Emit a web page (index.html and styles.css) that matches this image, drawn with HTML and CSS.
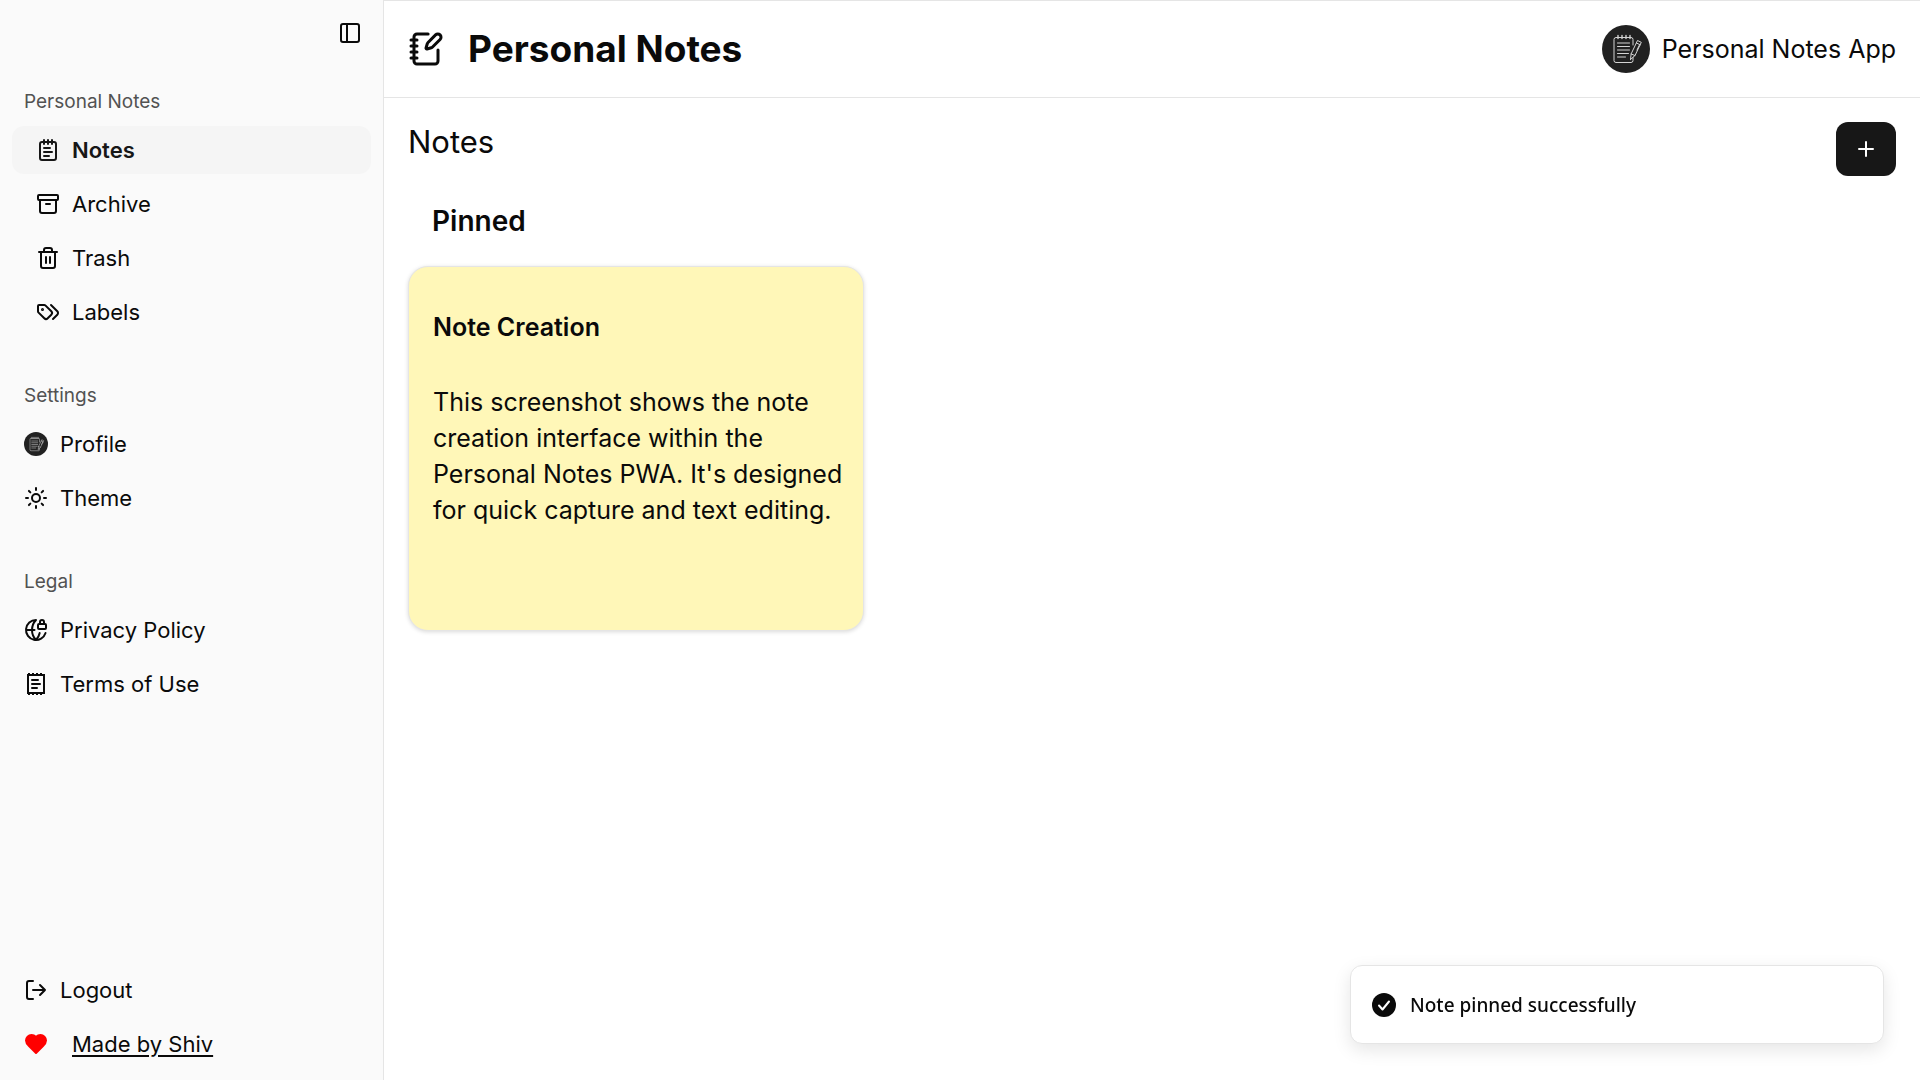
FILE: index.html
```html
<!DOCTYPE html>
<html lang="en">
<head>
<meta charset="utf-8">
<meta name="viewport" content="width=device-width, initial-scale=1">
<title>Personal Notes</title>
<link rel="stylesheet" href="styles.css">
</head>
<body>
<svg class="defs" aria-hidden="true">
  <symbol id="logo" viewBox="0 0 48 48">
    <circle cx="24" cy="24" r="24" fill="#212121"/>
    <g fill="none" stroke="#d4d4d4" stroke-linecap="round" stroke-linejoin="round">
      <path d="M31 31v4.500a2 2 0 0 1-2 2H14a2 2 0 0 1-2-2V14.500a2 2 0 0 1 2-2h15a2 2 0 0 1 2 2V20"/>
      <path stroke-width="1.400" d="M16 10.500v3M20 10.500v3M24 10.500v3M28 10.500v3"/>
      <path d="M15.500 18h12M15.500 21.500h12M15.500 25h12M15.500 28.500h11M15.500 32h8"/>
      <path fill="#212121" d="M28.500 34.500l.6-5.500 6.400-13.500 3.800 1.800L33 30.500l-4.500 4zM29.100 29l3.900 1.500M34.400 18l3.800 1.800M35 25l2.200-4.500"/>
    </g>
  </symbol>
</svg>
<div class="app">
  <aside class="sidebar">
    <div class="sidebar-top">
      <button class="icon-button" aria-label="Toggle sidebar">
        <svg class="icon" viewBox="0 0 24 24"><rect x="3" y="3" width="18" height="18" rx="2"/><path d="M9 3v18"/></svg>
      </button>
    </div>
    <nav class="groups">
      <section class="group">
        <h2 class="group-label">Personal Notes</h2>
        <a class="item nested active" href="#notes">
          <svg class="icon" viewBox="0 0 24 24"><path d="M8 2v4M12 2v4M16 2v4"/><rect x="4" y="4" width="16" height="18" rx="2"/><path d="M8 10h6M8 14h8M8 18h5"/></svg>
          <span>Notes</span></a>
        <a class="item nested" href="#archive">
          <svg class="icon" viewBox="0 0 24 24"><rect x="2" y="3" width="20" height="5" rx="1"/><path d="M4 8v11a2 2 0 0 0 2 2h12a2 2 0 0 0 2-2V8M10 12h4"/></svg>
          <span>Archive</span></a>
        <a class="item nested" href="#trash">
          <svg class="icon" viewBox="0 0 24 24"><path d="M3 6h18M19 6v14a2 2 0 0 1-2 2H7a2 2 0 0 1-2-2V6M8 6V4a2 2 0 0 1 2-2h4a2 2 0 0 1 2 2v2M10 11v6M14 11v6"/></svg>
          <span>Trash</span></a>
        <a class="item nested" href="#labels">
          <svg class="icon" viewBox="0 0 24 24"><path d="m15 5 6.300 6.300a2.400 2.400 0 0 1 0 3.400L17 19"/><path d="M9.586 5.586A2 2 0 0 0 8.172 5H3a1 1 0 0 0-1 1v5.172a2 2 0 0 0 .586 1.414L8.290 18.290a2.426 2.426 0 0 0 3.420 0l3.580-3.580a2.426 2.426 0 0 0 0-3.420z"/><circle cx="6.500" cy="9.500" r=".5" fill="currentColor"/></svg>
          <span>Labels</span></a>
      </section>
      <section class="group">
        <h2 class="group-label">Settings</h2>
        <a class="item" href="#profile"><svg class="avatar-small"><use href="#logo"/></svg><span>Profile</span></a>
        <button class="item">
          <svg class="icon" viewBox="0 0 24 24"><circle cx="12" cy="12" r="4"/><path d="M12 2v2M12 20v2M4.930 4.930l1.410 1.410M17.660 17.660l1.410 1.410M2 12h2M20 12h2M6.340 17.660l-1.410 1.410M19.070 4.930l-1.410 1.410"/></svg>
          <span>Theme</span></button>
      </section>
      <section class="group">
        <h2 class="group-label">Legal</h2>
        <a class="item" href="#privacy">
          <svg class="icon" viewBox="0 0 24 24"><path d="M15.686 15A14.500 14.500 0 0 1 12 22a14.500 14.500 0 0 1 0-20 10 10 0 1 0 9.542 13M2 12h8.500M20 6V4a2 2 0 1 0-4 0v2"/><rect x="14" y="6" width="8" height="5" rx="1"/></svg>
          <span>Privacy Policy</span></a>
        <a class="item" href="#terms">
          <svg class="icon" viewBox="0 0 24 24"><path stroke-linejoin="miter" d="M4 3v18h16V3z"/><path stroke-width="1" stroke-dasharray="2 2" stroke-linecap="butt" d="M4 1.500h16M4 22.500h16"/><path d="M8 8h6M8 12h8M8 16h5"/></svg>
          <span>Terms of Use</span></a>
      </section>
    </nav>
    <footer class="sidebar-footer">
      <button class="item">
        <svg class="icon" viewBox="0 0 24 24"><path d="M9 21H5a2 2 0 0 1-2-2V5a2 2 0 0 1 2-2h4M16 17l5-5-5-5M21 12H9"/></svg>
        <span>Logout</span></button>
      <div class="item credit">
        <svg class="icon heart" viewBox="0 0 24 24"><path d="M19 14c1.490-1.460 3-3.210 3-5.500A5.500 5.500 0 0 0 16.500 3c-1.760 0-3 .5-4.500 2-1.500-1.500-2.740-2-4.500-2A5.500 5.500 0 0 0 2 8.500c0 2.300 1.500 4.050 3 5.500l7 7Z"/></svg>
        <a href="#shiv">Made by Shiv</a></div>
    </footer>
  </aside>

  <main class="main">
    <header class="topbar">
      <svg class="brand-icon" viewBox="0 0 24 24"><path d="M13.400 2H6a2 2 0 0 0-2 2v16a2 2 0 0 0 2 2h12a2 2 0 0 0 2-2v-7.400M2 6h4M2 10h4M2 14h4M2 18h4"/><path d="M21.378 5.626a1 1 0 1 0-3.004-3.004l-5.010 5.012a2 2 0 0 0-.506.854l-.837 2.870a.5.5 0 0 0 .620.620l2.870-.837a2 2 0 0 0 .854-.506z"/></svg>
      <h1 class="title">Personal Notes</h1>
      <a class="account" href="#profile"><svg class="avatar"><use href="#logo"/></svg><span>Personal Notes App</span></a>
    </header>
    <div class="content">
      <div class="content-head">
        <h2 class="page-name">Notes</h2>
        <button class="add" aria-label="Add note"><svg class="icon" viewBox="0 0 24 24"><path d="M5 12h14M12 5v14"/></svg></button>
      </div>
      <h3 class="section-name">Pinned</h3>
      <div class="grid">
        <article class="card">
          <h4 class="card-title">Note Creation</h4>
          <p class="card-text">This screenshot shows the note creation interface within the Personal Notes PWA. It's designed for quick capture and text editing.</p>
        </article>
      </div>
    </div>
  </main>
</div>
<div class="toast" role="status">
  <svg class="toast-icon" viewBox="0 0 24 24"><circle cx="12" cy="12" r="12" fill="#0a0a0a"/><path d="M7 12.500l3.500 4L17 8.500" fill="none" stroke="#fff" stroke-width="2" stroke-linecap="round" stroke-linejoin="round"/></svg>
  <span>Note pinned successfully</span>
</div>
</body>
</html>
```
FILE: styles.css
```css
* { box-sizing: border-box; }
body {
  margin: 0;
  font-family: Inter, "Liberation Sans", sans-serif;
  font-size: 22px;
  color: #0a0a0a;
  background: #fff;
}
h1, h2, h3, h4, p { margin: 0; }
a { color: inherit; }
button { font: inherit; color: inherit; border: 0; background: none; cursor: pointer; }
.defs { position: absolute; width: 0; height: 0; }
.icon {
  width: 24px;
  height: 24px;
  flex: none;
  fill: none;
  stroke: currentColor;
  stroke-width: 2;
  stroke-linecap: round;
  stroke-linejoin: round;
}
.app { display: flex; min-height: 100vh; }

.sidebar {
  display: flex;
  flex-direction: column;
  flex: none;
  width: 384px;
  padding: 12px;
  background: #fafafa;
  border-right: 1px solid #e5e5e5;
}
.sidebar-top { display: flex; justify-content: flex-end; height: 72px; }
.icon-button {
  display: flex;
  align-items: center;
  justify-content: center;
  width: 42px;
  height: 42px;
  padding: 0;
}
.groups { display: flex; flex-direction: column; gap: 42px; flex: 1; }
.group { display: flex; flex-direction: column; gap: 6px; }
.group-label {
  padding: 0 12px;
  font-size: 19px;
  line-height: 36px;
  font-weight: 400;
  color: #525252;
}
.item {
  display: flex;
  align-items: center;
  gap: 12px;
  width: 100%;
  height: 48px;
  padding: 0 12px;
  border-radius: 12px;
  line-height: 30px;
  text-align: left;
  text-decoration: none;
}
.nested { padding: 0 24px; }
.active { background: #f5f5f5; font-weight: 600; color: #171717; }
.avatar-small { width: 24px; height: 24px; flex: none; }
.sidebar-footer { display: flex; flex-direction: column; gap: 6px; }
.credit { gap: 24px; }
.credit a { text-underline-offset: 3px; text-decoration-thickness: 2px; }
.heart { color: #f00; fill: currentColor; }

.main { flex: 1; min-width: 0; }
.topbar {
  display: flex;
  align-items: center;
  height: 98px;
  padding: 0 24px;
  border-top: 1px solid #e5e5e5;
  border-bottom: 1px solid #e5e5e5;
}
.brand-icon {
  width: 36px;
  height: 36px;
  margin-right: 24px;
  fill: none;
  stroke: currentColor;
  stroke-width: 2;
  stroke-linecap: round;
  stroke-linejoin: round;
}
.title { font-size: 37px; line-height: 48px; font-weight: 700; }
.account {
  display: flex;
  align-items: center;
  gap: 12px;
  margin-left: auto;
  font-size: 25px;
  text-decoration: none;
}
.avatar { width: 48px; height: 48px; }
.content { padding: 24px; }
.content-head { display: flex; justify-content: space-between; align-items: flex-start; }
.page-name { font-size: 31px; line-height: 40px; font-weight: 400; }
.add {
  display: flex;
  align-items: center;
  justify-content: center;
  width: 60px;
  height: 54px;
  padding: 0;
  border-radius: 12px;
  background: #171717;
  color: #fff;
}
.section-name { padding: 24px; font-size: 28px; line-height: 42px; font-weight: 600; }
.grid { display: grid; grid-template-columns: repeat(3, minmax(0, 1fr)); gap: 60px; }
.card {
  min-height: 365px;
  padding: 42px 16px 42px 24px;
  border: 1px solid #e5e5e5;
  border-radius: 20px;
  background: #fff7b8;
  box-shadow: 0 1px 4px rgba(0, 0, 0, .15);
}
.card-title { font-size: 25px; line-height: 36px; font-weight: 600; }
.card-text { margin-top: 39px; font-size: 25px; line-height: 36px; }

.toast {
  position: fixed;
  right: 36px;
  bottom: 36px;
  display: flex;
  align-items: center;
  gap: 14px;
  width: 534px;
  height: 79px;
  padding: 0 21px;
  border: 1px solid #e5e5e5;
  border-radius: 12px;
  background: #fff;
  box-shadow: 0 6px 18px rgba(0, 0, 0, .1);
  font-family: "Noto Sans", sans-serif;
  font-size: 19px;
  font-weight: 500;
}
.toast-icon { width: 24px; height: 24px; }
```
